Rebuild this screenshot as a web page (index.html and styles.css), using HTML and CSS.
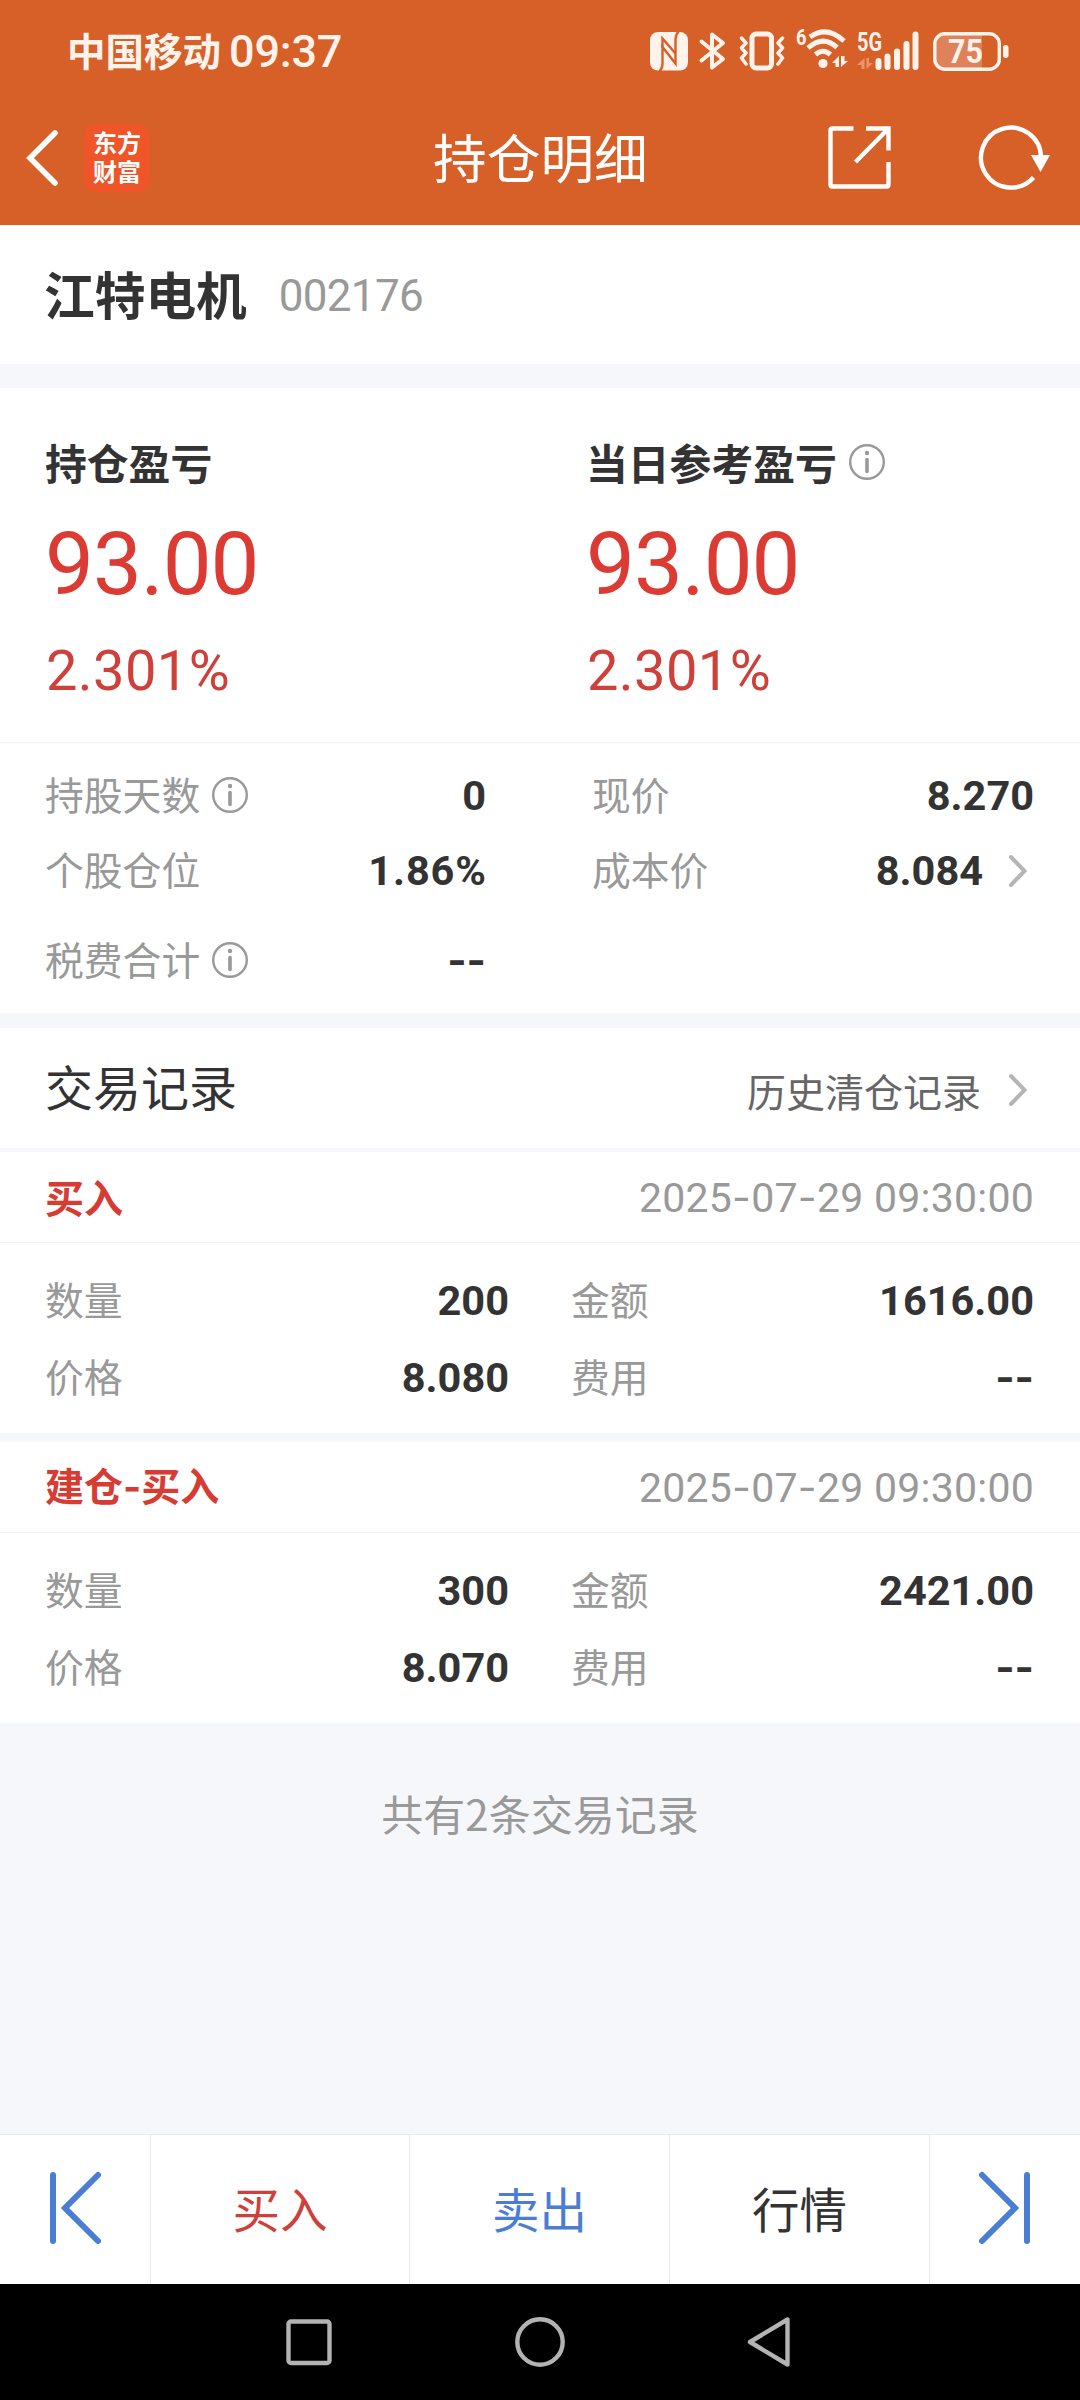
FILE: index.html
```html
<!DOCTYPE html>
<html lang="zh-CN">
<head>
<meta charset="utf-8">
<title>持仓明细</title>
<link rel="stylesheet" href="styles.css">
</head>
<body>
<svg width="0" height="0" class="defs">
  <symbol id="info" viewBox="0 0 36 36">
    <circle cx="18" cy="18" r="16.8" fill="none" stroke="#999" stroke-width="2.4"/>
    <circle cx="18" cy="9" r="2.2" fill="#999"/>
    <path d="M18 15.5V27.5" stroke="#999" stroke-width="3.6" stroke-linecap="round"/>
  </symbol>
  <symbol id="chevron" viewBox="0 0 20 34">
    <path d="M3 3L16.500 17L3 31" fill="none" stroke="#b5b5b5" stroke-width="4" stroke-linecap="round"/>
  </symbol>
  <symbol id="edge" viewBox="0 0 52 74">
    <path d="M4 4V70M49 4L16 37L49 70" fill="none" stroke="#4a7dd4" stroke-width="6" stroke-linecap="round"/>
  </symbol>
</svg>

<header class="header">
  <div class="status">
    <span class="carrier">中国移动</span><span class="clock">09:37</span>
    <div class="indicators">
      <svg class="nfc" width="38" height="39" viewBox="0 0 38 39">
        <rect width="38" height="38.500" rx="8" fill="#fff3ec"/>
        <path d="M9.500 39.500Q12.500 36 12.500 32V15L25.500 31.500V7Q25.500 2.500 29 -1" fill="none" stroke="#d75f28" stroke-width="2.400"/>
        <path d="M12.500 16V6.500L25.500 21.500" fill="none" stroke="#d75f28" stroke-width="2.400"/>
      </svg>
      <svg class="bluetooth" width="26" height="38" viewBox="0 0 26 38">
        <path d="M1.500 9.500L23 27L12 35.500V2.500L23 11L1.500 28.500" fill="none" stroke="#fff3ec" stroke-width="4" stroke-linejoin="round" stroke-linecap="round"/>
      </svg>
      <svg class="vibrate" width="46" height="40" viewBox="0 0 46 40">
        <rect x="13" y="3" width="19.500" height="34" rx="4" fill="none" stroke="#fff3ec" stroke-width="5"/>
        <path d="M2.500 7L7 12L2.500 17L7 22L2.500 27L7 33M43.500 7L39 12L43.500 17L39 22L43.500 27L39 33" fill="none" stroke="#fff3ec" stroke-width="3.500" stroke-linejoin="round" stroke-linecap="round"/>
      </svg>
      <svg class="wifi" width="52" height="42" viewBox="0 0 52 42">
        <text x="0" y="17" class="tiny-six" textLength="10.500" lengthAdjust="spacingAndGlyphs">6</text>
        <path d="M14 9Q30.500 -3 48 13" fill="none" stroke="#fff3ec" stroke-width="5"/>
        <path d="M12 20Q27 6.500 41 19.500" fill="none" stroke="#fff3ec" stroke-width="5"/>
        <path d="M19.500 26.500Q27 20 34.500 26.500" fill="none" stroke="#fff3ec" stroke-width="5"/>
        <circle cx="27" cy="35.500" r="4.600" fill="#fff3ec"/>
        <path d="M43 28V39H39.500V35H36ZM45 28V39L52 33H48.500V28Z" fill="#fff3ec"/>
      </svg>
      <svg class="signal" width="62" height="40" viewBox="0 0 62 40">
        <text x="0" y="20" class="tiny-net" textLength="25" lengthAdjust="spacingAndGlyphs">5G</text>
        <path d="M7.500 27V38H4.500V34H0ZM9.500 27V38L16 32H12V27Z" fill="#eb936d"/>
        <path d="M21.500 30V36M30.500 25.500V36M40 20.500V36M49.500 13V36M58.500 3.500V36" stroke="#fff3ec" stroke-width="6" stroke-linecap="round"/>
      </svg>
      <svg class="battery" width="76" height="39" viewBox="0 0 76 39">
        <path d="M12 3H49V36H12Q3 36 3 27V12Q3 3 12 3Z" fill="#e08259"/>
        <rect x="1.800" y="1.800" width="64.500" height="35.400" rx="10" fill="none" stroke="#fff3ec" stroke-width="3.400"/>
        <rect x="70" y="13" width="5.500" height="13" rx="2.700" fill="#fff3ec"/>
        <text x="15" y="31" class="charge" textLength="35" lengthAdjust="spacingAndGlyphs">75</text>
      </svg>
    </div>
  </div>
  <div class="navbar">
    <svg class="back" width="34" height="58" viewBox="0 0 34 58"><path d="M30 4L5 29L30 54" fill="none" stroke="#fff" stroke-width="5.500" stroke-linecap="round"/></svg>
    <div class="logo"><span>东方</span><span>财富</span></div>
    <h1 class="title">持仓明细</h1>
    <svg class="share" width="64" height="64" viewBox="0 0 64 64">
      <path d="M25.500 2.500H4.500Q2.500 2.500 2.500 4.500V58.500Q2.500 60.500 4.500 60.500H58.500Q60.500 60.500 60.500 58.500V36M38 2.500H60.500V24.500M60 3L27.500 36" fill="none" stroke="#fff" stroke-width="4.400"/>
    </svg>
    <svg class="refresh" width="72" height="64" viewBox="0 0 72 64">
      <path d="M54.500 51.500A30 30 0 1 1 62 31" fill="none" stroke="#fff" stroke-width="4.400"/>
      <path d="M52 29H71L61.500 46Z" fill="#fff"/>
    </svg>
  </div>
</header>

<section class="stock">
  <h2 class="stock-name">江特电机</h2>
  <span class="stock-code">002176</span>
</section>

<section class="profit">
  <div class="profit-col">
    <div class="profit-label">持仓盈亏</div>
    <div class="profit-value">93.00</div>
    <div class="profit-rate">2.301%</div>
  </div>
  <div class="profit-col">
    <div class="profit-label">当日参考盈亏<svg class="info"><use href="#info"/></svg></div>
    <div class="profit-value">93.00</div>
    <div class="profit-rate">2.301%</div>
  </div>
</section>

<section class="details">
  <div class="pair"><span class="key">持股天数<svg class="info"><use href="#info"/></svg></span><span class="val">0</span></div>
  <div class="pair"><span class="key">现价</span><span class="val">8.270</span></div>
  <div class="pair"><span class="key">个股仓位</span><span class="val percent">1.86%</span></div>
  <div class="pair"><span class="key">成本价</span><span class="val">8.084</span><svg class="chevron"><use href="#chevron"/></svg></div>
  <div class="pair"><span class="key">税费合计<svg class="info"><use href="#info"/></svg></span><span class="val none">--</span></div>
</section>

<section class="records-head">
  <h3 class="records-title">交易记录</h3>
  <a class="history">历史清仓记录<svg class="chevron"><use href="#chevron"/></svg></a>
</section>

<article class="record">
  <div class="record-head"><span class="side">买入</span><time class="time">2025<span class="dash">-</span>07<span class="dash">-</span>29 09:30:00</time></div>
  <div class="record-body">
    <div class="pair"><span class="key">数量</span><span class="val">200</span></div>
    <div class="pair"><span class="key">金额</span><span class="val">1616.00</span></div>
    <div class="pair"><span class="key">价格</span><span class="val">8.080</span></div>
    <div class="pair"><span class="key">费用</span><span class="val none">--</span></div>
  </div>
</article>

<article class="record">
  <div class="record-head"><span class="side">建仓<span class="dash">-</span>买入</span><time class="time">2025<span class="dash">-</span>07<span class="dash">-</span>29 09:30:00</time></div>
  <div class="record-body">
    <div class="pair"><span class="key">数量</span><span class="val">300</span></div>
    <div class="pair"><span class="key">金额</span><span class="val">2421.00</span></div>
    <div class="pair"><span class="key">价格</span><span class="val">8.070</span></div>
    <div class="pair"><span class="key">费用</span><span class="val none">--</span></div>
  </div>
</article>

<p class="summary">共有2条交易记录</p>

<nav class="actions">
  <a class="edge"><svg class="edge-icon"><use href="#edge"/></svg></a>
  <a class="action buy">买入</a>
  <a class="action sell">卖出</a>
  <a class="action quote">行情</a>
  <a class="edge"><svg class="edge-icon flip"><use href="#edge"/></svg></a>
</nav>

<div class="system-nav">
  <svg width="50" height="52" viewBox="0 0 50 52"><rect x="4.500" y="5.500" width="41" height="41.500" rx="2.500" fill="none" stroke="#b3b3b3" stroke-width="4.400"/></svg>
  <svg width="50" height="52" viewBox="0 0 50 52"><circle cx="25" cy="26" r="22.700" fill="none" stroke="#b3b3b3" stroke-width="4.400"/></svg>
  <svg width="50" height="52" viewBox="0 0 50 52"><path d="M41.500 3.500V48.500L4 26Z" fill="none" stroke="#b3b3b3" stroke-width="4.400" stroke-linejoin="round"/></svg>
</div>
</body>
</html>
```
FILE: styles.css
```css
* { box-sizing: border-box; }
body {
  margin: 0;
  width: 1080px;
  height: 2400px;
  display: flex;
  flex-direction: column;
  background: #f6f7fa;
  color: #333;
  font-family: "Noto Sans CJK SC", sans-serif;
  overflow: hidden;
}
h1, h2, h3, p { margin: 0; font-weight: 400; }
svg { display: block; flex: none; overflow: visible; }
.defs { position: absolute; }

.header { height: 225px; background: #d75f28; color: #fff; }
.status {
  height: 90px;
  padding: 13px 71px 0 67px;
  display: flex;
  align-items: center;
  color: #fff3ec;
}
.carrier { font-size: 38.500px; font-weight: 700; line-height: 60px; margin-top: -6px; }
.clock { font: 500 45px/60px Roboto, sans-serif; margin-left: 8px; letter-spacing: -0.200px; }
.indicators { display: flex; align-items: center; margin-left: auto; margin-top: -1px; }
.nfc { overflow: hidden; }
.bluetooth { margin-left: 12px; }
.vibrate { margin-left: 13px; }
.wifi { margin-left: 11px; margin-top: -4px; }
.signal { margin-left: 9px; }
.battery { margin-left: 14px; }
.tiny-six { font: 700 22px Roboto, sans-serif; fill: #fff3ec; }
.tiny-net { font: 700 25px Roboto, sans-serif; fill: #fff3ec; }
.charge { font: 700 34px Roboto, sans-serif; fill: #fff3ec; }

.navbar {
  height: 135px;
  display: grid;
  grid-template-columns: 25px 59px 349px 395px 151px 72px;
  align-items: center;
}
.back { grid-column: 2; }
.logo {
  grid-column: 3;
  width: 66px;
  height: 68px;
  border-radius: 12px;
  background: #ee5528;
  display: grid;
  grid-template-rows: 29px 29px;
  justify-items: center;
  align-content: center;
  font-size: 24px;
  font-weight: 700;
  line-height: 29px;
  padding-bottom: 4px;
}
.title { grid-column: 4; font-size: 53.700px; line-height: 70px; font-weight: 400; margin-top: -3px; }

.stock {
  height: 139px;
  padding-left: 44px;
  display: flex;
  align-items: center;
  background: #fff;
}
.stock-name { font-size: 50.700px; font-weight: 700; line-height: 60px; margin-top: -4px; }
.stock-code { font: 400 44px/60px Roboto, sans-serif; color: #999; margin-left: 32px; margin-top: 2px; letter-spacing: -0.700px; }

.profit {
  margin-top: 24px;
  height: 355px;
  padding: 44px 0 0 45px;
  display: grid;
  grid-template-columns: 541px 1fr;
  background: #fff;
  border-bottom: 1px solid #eff1f4;
}
.profit-label { display: flex; align-items: center; gap: 12px; font-size: 41.800px; font-weight: 700; line-height: 60px; }
.info { width: 36px; height: 36px; }
.profit-value { font: 400 87px/100px Roboto, sans-serif; color: #db3b32; letter-spacing: -1px; margin-top: 22px; }
.profit-rate { font: 400 56px/70px Roboto, sans-serif; color: #ce413a; letter-spacing: 0.400px; margin-top: 22px; padding-left: 1px; }

.details {
  height: 270px;
  padding: 15px 46px 0 45px;
  display: grid;
  grid-template-columns: 441px 442px;
  grid-template-rows: 75px 75px 105px;
  column-gap: 106px;
  background: #fff;
}
.pair { display: flex; align-items: center; justify-content: space-between; }
.key { display: flex; align-items: center; gap: 12px; font-size: 38.800px; line-height: 60px; color: #999; margin-top: -5px; }
.key .info { margin-top: 4px; }
.val { font: 700 41.500px/60px Roboto, sans-serif; margin-left: auto; }
.percent { letter-spacing: 0.900px; margin-right: -0.900px; }
.none { font-family: Inter, sans-serif; margin-top: -2px; }
.chevron { width: 20px; height: 34px; margin-left: 27px; margin-right: 6px; }
.pair .chevron { margin-left: 25px; }

.records-head {
  margin-top: 15px;
  height: 120px;
  padding: 0 46px 0 45px;
  display: flex;
  align-items: center;
  justify-content: space-between;
  background: #fff;
}
.records-title { font-size: 48px; line-height: 60px; margin-top: -6px; }
.history { display: flex; align-items: center; font-size: 39px; line-height: 60px; color: #666; margin-top: 3px; }

.record { height: 281px; margin-top: 4px; background: #fff; }
.record + .record { margin-top: 9px; }
.record-head {
  height: 91px;
  padding: 0 46px 0 45px;
  display: flex;
  align-items: center;
  justify-content: space-between;
  border-bottom: 1px solid #f0f2f5;
}
.side { font-size: 39px; font-weight: 700; line-height: 60px; color: #d63c33; margin-top: -3px; }
.dash { font-family: Inter, sans-serif; }
.time { font: 400 41px/60px Roboto, sans-serif; color: #999; letter-spacing: 0.250px; }
.record-body {
  height: 190px;
  padding: 19px 46px 0 45px;
  display: grid;
  grid-template-columns: 464px 463px;
  grid-template-rows: 77px 77px;
  column-gap: 62px;
}

.summary { text-align: center; font-size: 42px; line-height: 60px; color: #999; margin-top: 60px; }

.actions {
  margin-top: auto;
  height: 150px;
  display: grid;
  grid-template-columns: 151px 259px 260px 260px 150px;
  background: #fff;
  border-top: 1px solid #eaeaea;
}
.actions > * { display: flex; align-items: center; justify-content: center; border-right: 1px solid #eaeaea; }
.actions > :last-child { border-right: 0; }
.action { font-size: 47.500px; padding-bottom: 4px; }
.edge { padding-bottom: 4px; }
.buy { color: #ce413a; }
.sell { color: #4a7dd4; }
.edge-icon { width: 52px; height: 74px; }
.flip { transform: scaleX(-1); }

.system-nav {
  height: 116px;
  display: flex;
  justify-content: center;
  align-items: center;
  gap: 181px;
  background: #000;
}
```
